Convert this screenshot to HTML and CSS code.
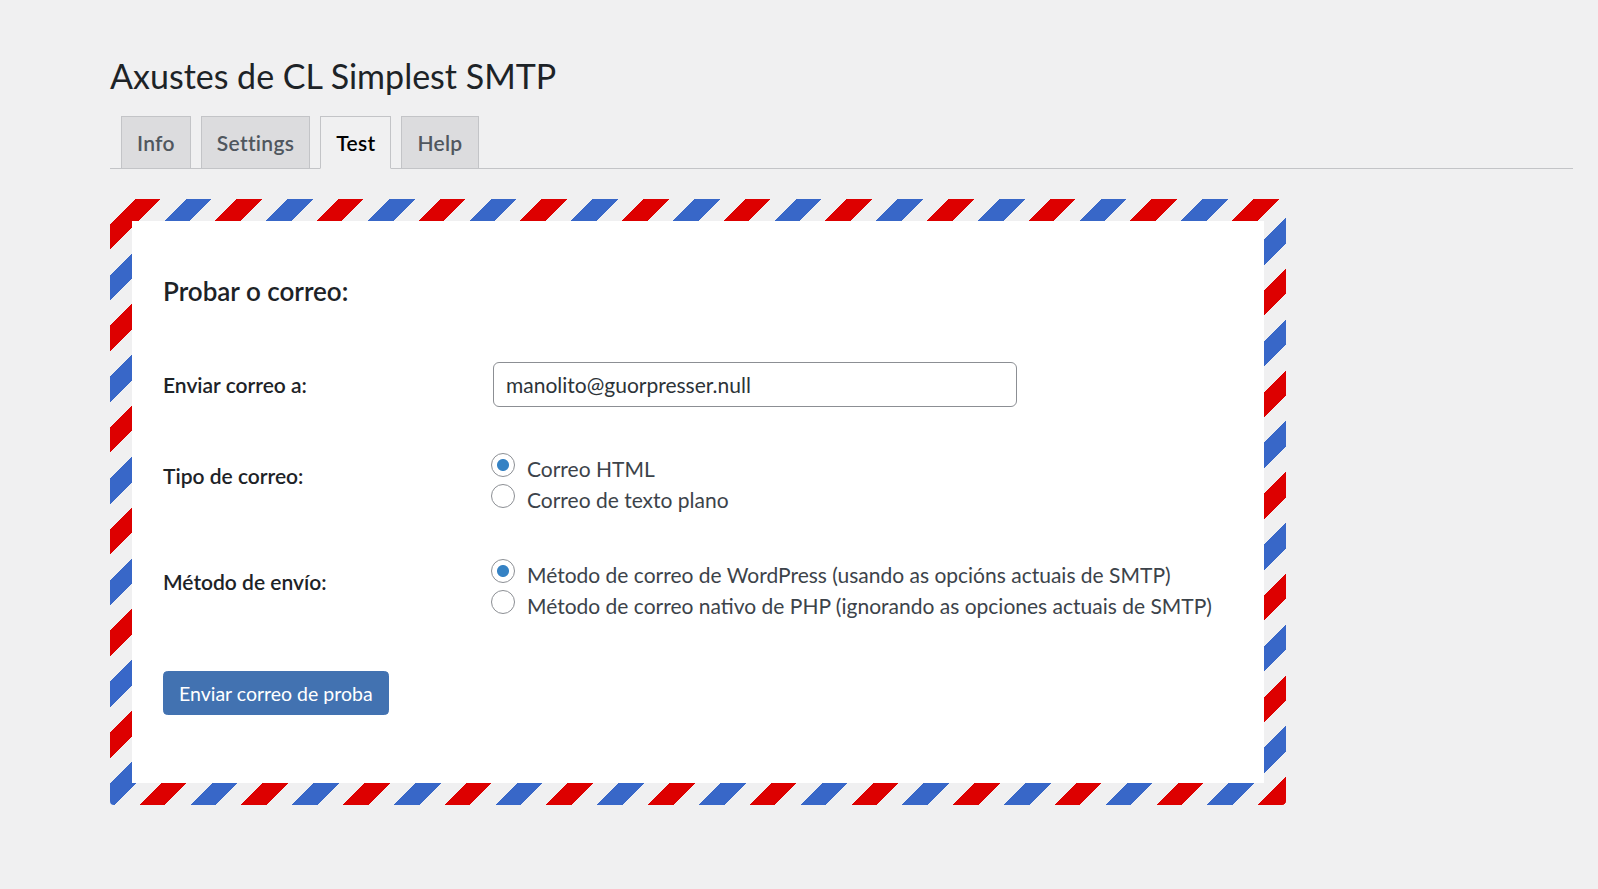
FILE: index.html
```html
<!DOCTYPE html>
<html lang="gl">
<head>
<meta charset="utf-8">
<title>Axustes de CL Simplest SMTP</title>
<link rel="stylesheet" href="styles.css">
</head>
<body>
<div class="wrap">
  <h1 class="page-title">Axustes de CL Simplest SMTP</h1>
  <nav class="tabs">
    <a class="tab" href="#">Info</a>
    <a class="tab" href="#">Settings</a>
    <a class="tab tab-active" href="#">Test</a>
    <a class="tab" href="#">Help</a>
  </nav>
  <div class="envelope">
    <div class="letter">
      <h2 class="letter-title">Probar o correo:</h2>
      <div class="row">
        <label class="row-label" for="to">Enviar correo a:</label>
        <div class="row-field">
          <input class="text-input" id="to" type="text" value="manolito@guorpresser.null">
        </div>
      </div>
      <div class="row row-spaced">
        <span class="row-label">Tipo de correo:</span>
        <div class="radio-group">
          <label class="radio"><input class="radio-input" type="radio" name="type" checked><span>Correo HTML</span></label>
          <label class="radio"><input class="radio-input" type="radio" name="type"><span>Correo de texto plano</span></label>
        </div>
      </div>
      <div class="row row-spaced">
        <span class="row-label">Método de envío:</span>
        <div class="radio-group">
          <label class="radio"><input class="radio-input" type="radio" name="method" checked><span>Método de correo de WordPress (usando as opcións actuais de SMTP)</span></label>
          <label class="radio"><input class="radio-input" type="radio" name="method"><span>Método de correo nativo de PHP (ignorando as opciones actuais de SMTP)</span></label>
        </div>
      </div>
      <button class="button-primary" type="button">Enviar correo de proba</button>
    </div>
  </div>
</div>
</body>
</html>
```
FILE: styles.css
```css
* { box-sizing: border-box; }

html, body {
  margin: 0;
  padding: 0;
  background: #f0f0f1;
  font-family: Lato, "Open Sans", "Noto Sans", sans-serif;
  color: #3c434a;
}

.wrap {
  padding: 53px 25px 0 110px;
}

.page-title {
  margin: 0;
  font-size: 34px;
  line-height: 45px;
  font-weight: 400;
  color: #1d2327;
}

.tabs {
  display: flex;
  align-items: flex-end;
  margin-top: 18px;
  border-bottom: 1px solid #c3c4c7;
  padding-left: 11px;
  gap: 10px;
}

.tab {
  display: block;
  margin-bottom: -1px;
  padding: 7.5px 15px;
  font-size: 21px;
  line-height: 36px;
  font-weight: 600;
  letter-spacing: 0.3px;
  color: #50575e;
  text-decoration: none;
  background: #dcdcde;
  border: 1px solid #c3c4c7;
}

.tab-active {
  background: #f0f0f1;
  color: #000;
  border-bottom-color: #f0f0f1;
}

.envelope {
  width: 1176px;
  margin-top: 30px;
  padding: 22px;
  border-radius: 4px;
  background: repeating-linear-gradient(135deg,
    transparent 0 17.8px,
    #dd0000 17.8px 35.8px,
    transparent 35.8px 53.8px,
    #3867c8 53.8px 71.9px);
}

.letter {
  background: #fff;
  padding: 53px 31px 68px;
}

.letter-title {
  margin: 0 0 54px;
  font-size: 26px;
  line-height: 34px;
  font-weight: 600;
  color: #1d2327;
}

.row {
  display: grid;
  grid-template-columns: 330px 1fr;
  align-items: start;
}

.row-spaced {
  margin-top: 46px;
}

.row-spaced + .row-spaced {
  margin-top: 44px;
}

.row-label {
  padding-top: 8px;
  font-size: 21px;
  line-height: 30px;
  font-weight: 600;
  color: #1d2327;
}

.text-input {
  display: block;
  width: 524px;
  height: 45px;
  padding: 0 12px;
  margin: 0;
  font-family: inherit;
  font-size: 21px;
  color: #2c3338;
  background: #fff;
  border: 1px solid #8c8f94;
  border-radius: 6px;
  outline: none;
}

.radio-group {
  display: flex;
  flex-direction: column;
  margin-left: -2px;
}

.radio {
  display: flex;
  align-items: center;
  gap: 12px;
  font-size: 21px;
  line-height: 30px;
  color: #3c434a;
}

.radio-input {
  appearance: none;
  -webkit-appearance: none;
  flex: none;
  width: 24px;
  height: 24px;
  margin: 0 0 7px;
  border: 1px solid #8c8f94;
  border-radius: 50%;
  background: #fff;
}

.radio-input:checked {
  background: radial-gradient(circle, #3582c4 0 5.5px, #fff 6.5px);
}

.button-primary {
  display: block;
  margin-top: 50px;
  height: 44px;
  padding: 0 15px;
  font-family: inherit;
  font-size: 19.5px;
  color: #fff;
  background: #4272b1;
  border: 1px solid #4272b1;
  border-radius: 4.5px;
}
```
